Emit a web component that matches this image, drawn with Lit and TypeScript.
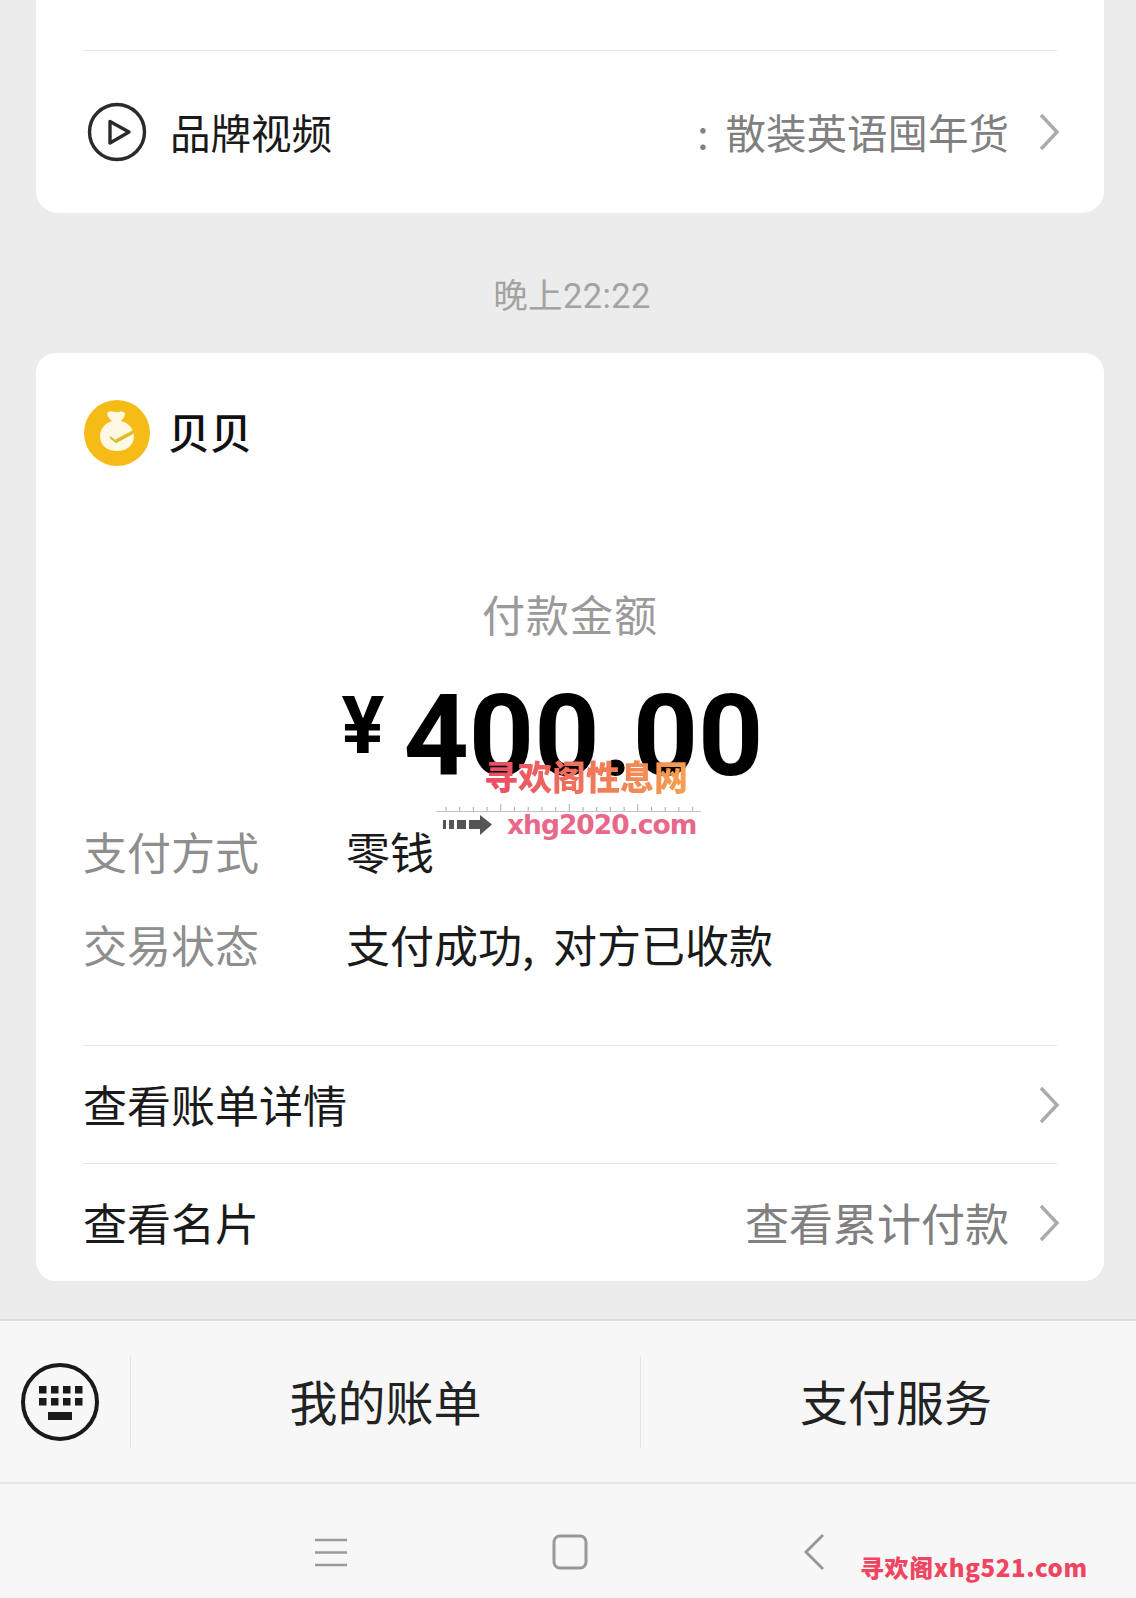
import { LitElement, html, css, svg } from 'lit';
import { customElement } from 'lit/decorators.js';

const chevron = svg`<svg class="chevron" viewBox="0 0 22 38" width="22" height="38"><path d="M3 2l16 17L3 36" fill="none" stroke="#aaa" stroke-width="3.4"/></svg>`;

@customElement('app-root')
export class AppRoot extends LitElement {
  static styles = css`
    :host {
      display: block;
      width: 1136px;
      height: 1598px;
      overflow: hidden;
      position: relative;
      background: #ececec;
      font-family: "Noto Sans CJK SC", "Liberation Sans", sans-serif;
      color: #1a1a1a;
    }
    .page {
      display: flex;
      flex-direction: column;
      height: 100%;
    }
    .card {
      margin: 0 32px 0 36px;
      background: #fff;
      border-radius: 20px;
    }
    .brand-card {
      border-radius: 0 0 22px 22px;
      padding: 50px 47px 0;
      height: 213px;
      box-sizing: border-box;
    }
    .brand-row {
      border-top: 1px solid #e8e8e8;
      height: 162px;
      display: flex;
      align-items: center;
      font-size: 40.500px;
    }
    .brand-row .play {
      margin-left: 4px;
      margin-right: 23px;
    }
    .brand-row span {
      padding-bottom: 2px;
    }
    .brand-name {
      flex: 1;
    }
    .muted {
      color: #808080;
      word-spacing: 8px;
    }
    .chevron {
      margin-left: 29px;
      margin-right: -3px;
      flex: none;
    }
    .time {
      height: 140px;
      box-sizing: border-box;
      padding: 20px 0 0 8px;
      display: flex;
      align-items: center;
      justify-content: center;
      font-size: 34.500px;
      letter-spacing: 0.4px;
      color: #a3a3a3;
      font-family: "Roboto", "Noto Sans CJK SC", sans-serif;
    }
    .pay-card {
      height: 928px;
      box-sizing: border-box;
      padding: 0 47px;
      display: flex;
      flex-direction: column;
    }
    .merchant {
      display: flex;
      align-items: center;
      gap: 18px;
      height: 159px;
      font-size: 42px;
      font-weight: 500;
      color: #111;
      padding-left: 1px;
    }
    .merchant span {
      padding-bottom: 4px;
    }
    .label-title {
      text-align: center;
      font-size: 43px;
      color: #9a9a9a;
      line-height: 60px;
      margin-top: 71px;
      letter-spacing: 1px;
    }
    .amount {
      display: flex;
      align-items: flex-start;
      justify-content: center;
      font-family: "Roboto", "Liberation Sans", sans-serif;
      font-weight: 700;
      color: #000;
      height: 179px;
      padding-right: 35px;
    }
    .amount .yen {
      font-size: 80px;
      line-height: 90px;
      margin-top: 38px;
      margin-right: 19px;
    }
    .amount .value {
      font-size: 114px;
      line-height: 132px;
      margin-top: 27px;
    }
    .detail {
      display: grid;
      grid-template-columns: 263px 1fr;
      row-gap: 33px;
      font-size: 44px;
      line-height: 60px;
      margin-top: -1px;
      word-spacing: 9px;
    }
    .detail .key {
      color: #8e8e8e;
    }
    .link-list {
      margin-top: 71px;
    }
    .link {
      border-top: 1px solid #e6e6e6;
      height: 117px;
      display: flex;
      align-items: center;
      font-size: 44px;
    }
    .link span {
      padding-bottom: 1px;
    }
    .link .grow {
      flex: 1;
    }
    .bar {
      margin-top: auto;
      background: #f7f7f7;
    }
    .menu {
      height: 165px;
      border-top: 2px solid #dcdcdc;
      border-bottom: 2px solid #e6e6e6;
      box-sizing: border-box;
      display: grid;
      grid-template-columns: 130px 510px 1fr;
      align-items: center;
      font-size: 48px;
      color: #222;
    }
    .menu > div {
      display: flex;
      align-items: center;
      justify-content: center;
      height: 92px;
    }
    .menu > div + div {
      border-left: 1px solid #e3e3e3;
      padding-bottom: 4px;
      box-sizing: border-box;
    }
    .menu .keys {
      padding-right: 10px;
    }
    .menu .right {
      padding-left: 15px;
    }
    .nav {
      display: flex;
      align-items: center;
      height: 114px;
      box-sizing: border-box;
      padding: 22px 0 0 314px;
    }
    .nav .home {
      margin-left: 204px;
    }
    .nav .back {
      margin-left: 214px;
    }
    .mark {
      position: absolute;
      white-space: nowrap;
    }
    .mark-title {
      left: 484px;
      top: 752px;
      font-family: "Noto Sans CJK SC", sans-serif;
      font-weight: 900;
      font-size: 34px;
      line-height: 48px;
      background: linear-gradient(90deg, #ea4a66, #f5a04f);
      -webkit-background-clip: text;
      background-clip: text;
      color: transparent;
    }
    .mark-ruler {
      left: 436px;
      top: 804px;
    }
    .mark-url {
      left: 507px;
      top: 808px;
      font-family: "DejaVu Sans", sans-serif;
      font-weight: 700;
      font-size: 26.500px;
      line-height: 34px;
      letter-spacing: -1px;
      color: #e8688a;
    }
    .mark-foot {
      left: 860px;
      top: 1549px;
      font-family: "Noto Sans CJK SC", "DejaVu Sans", sans-serif;
      font-weight: 900;
      font-size: 24px;
      line-height: 36px;
      color: #ef4560;
      letter-spacing: 0.6px;
    }
  `;

  renderTicks() {
    const ticks = [];
    for (let i = 0; i < 19; i++) {
      const h = i % 5 === 4 ? 7 : 4;
      ticks.push(svg`<path d="M${10 + i * 13.7} 7V${7 - h}" stroke="#888" stroke-width="0.7"/>`);
    }
    return ticks;
  }

  render() {
    return html`
      <div class="page">
        <section class="card brand-card">
          <div class="brand-row">
            <svg class="play" width="60" height="60" viewBox="0 0 60 60">
              <circle cx="30" cy="30" r="27.500" fill="none" stroke="#2b2b2b" stroke-width="3.400"/>
              <path d="M23 19.500L42 30 23 41z" fill="none" stroke="#2b2b2b" stroke-width="3.400" stroke-linejoin="round"/>
            </svg>
            <span class="brand-name">品牌视频</span>
            <span class="muted">: 散装英语囤年货</span>
            ${chevron}
          </div>
        </section>

        <div class="time">晚上22:22</div>

        <section class="card pay-card">
          <div class="merchant">
            <svg width="66" height="66" viewBox="0 0 66 66">
              <circle cx="33" cy="33" r="33" fill="#f5bc17"/>
              <path d="M24 12c4-2 8 1 11 0 3-1 6 0 6 2 0 2-2 5-4 7 8 2 13 8 13 15 0 9-7 15-17 15s-17-6-17-15c0-7 5-13 12-15-3-2-6-7-4-9z" fill="#fff8e4"/>
              <path d="M51 31L32 41" fill="none" stroke="#f5bc17" stroke-width="3.500"/>
              <path d="M26 37l6 5 16-9" fill="none" stroke="#d3bf3c" stroke-width="2.200"/>
            </svg>
            <span>贝贝</span>
          </div>
          <div class="label-title">付款金额</div>
          <div class="amount">
            <span class="yen">¥</span>
            <span class="value">400.00</span>
          </div>
          <div class="detail">
            <span class="key">支付方式</span><span>零钱</span>
            <span class="key">交易状态</span><span>支付成功, 对方已收款</span>
          </div>
          <div class="link-list">
            <div class="link"><span class="grow">查看账单详情</span>${chevron}</div>
            <div class="link"><span class="grow">查看名片</span><span class="muted">查看累计付款</span>${chevron}</div>
          </div>
        </section>

        <footer class="bar">
          <div class="menu">
            <div class="keys">
              <svg width="80" height="80" viewBox="0 0 80 80">
                <circle cx="40" cy="40" r="37" fill="none" stroke="#1a1a1a" stroke-width="4"/>
                <path d="M19 24h7.500v7.500H19zM31 24h7.500v7.500H31zM43 24h7.500v7.500H43zM55 24h7.500v7.500H55zM19 36h7.500v7.500H19zM31 36h7.500v7.500H31zM43 36h7.500v7.500H43zM55 36h7.500v7.500H55zM28 50h24v8H28z" fill="#1a1a1a"/>
              </svg>
            </div>
            <div>我的账单</div>
            <div class="right">支付服务</div>
          </div>
          <div class="nav">
            <svg width="34" height="30" viewBox="0 0 34 30">
              <path d="M1 3h32M1 15.500h32M1 28h32" stroke="#9a9a9a" stroke-width="2.600"/>
            </svg>
            <svg class="home" width="36" height="36" viewBox="0 0 36 36">
              <rect x="2" y="2" width="32" height="32" rx="6" fill="none" stroke="#999" stroke-width="3"/>
            </svg>
            <svg class="back" width="24" height="38" viewBox="0 0 24 38">
              <path d="M21 2L4 19l17 17" fill="none" stroke="#999" stroke-width="3"/>
            </svg>
          </div>
        </footer>
      </div>

      <span class="mark mark-title">寻欢阁性息网</span>
      <svg class="mark mark-ruler" width="268" height="34" viewBox="0 0 268 34">
        <path d="M0 7.500h265" stroke="#c4c4c4" stroke-width="1"/>
        ${this.renderTicks()}
        <path d="M7 16h3v9H7zM13 16h5v9h-5zM21 16h9v9h-9zM33 16h11v-5l12 9.500L44 31v-6H33z" fill="#555"/>
      </svg>
      <span class="mark mark-url">xhg2020.com</span>
      <span class="mark mark-foot">寻欢阁xhg521.com</span>
    `;
  }
}
